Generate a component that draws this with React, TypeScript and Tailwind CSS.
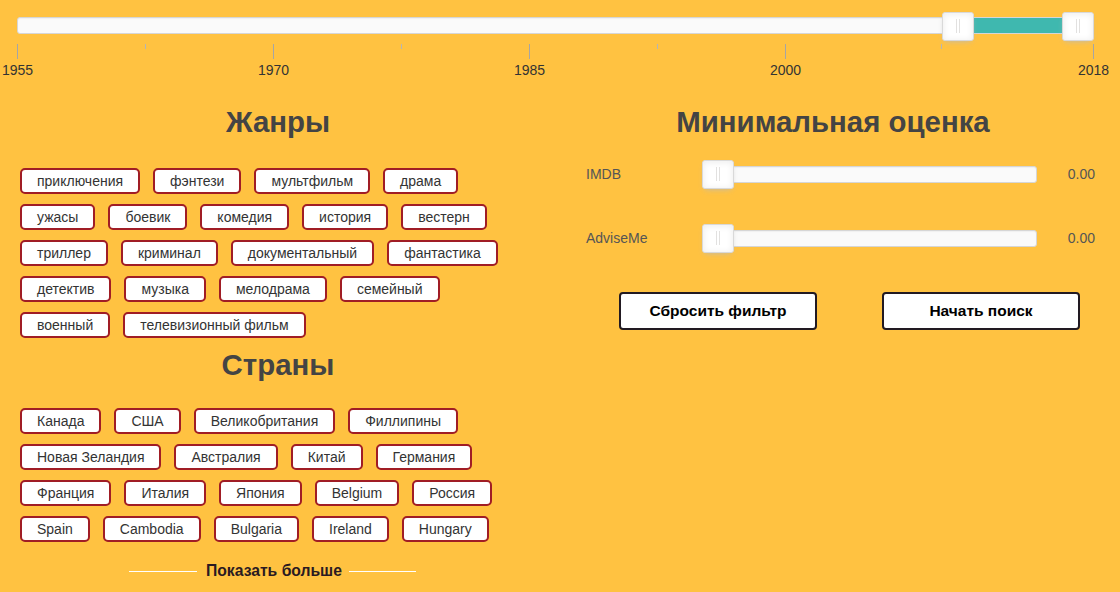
import React from "react";

const genres = [
  "приключения", "фэнтези", "мультфильм", "драма",
  "ужасы", "боевик", "комедия", "история", "вестерн",
  "триллер", "криминал", "документальный", "фантастика",
  "детектив", "музыка", "мелодрама", "семейный",
  "военный", "телевизионный фильм",
];

const countries = [
  "Канада", "США", "Великобритания", "Филлипины",
  "Новая Зеландия", "Австралия", "Китай", "Германия",
  "Франция", "Италия", "Япония", "Belgium", "Россия",
  "Spain", "Cambodia", "Bulgaria", "Ireland", "Hungary",
];

const majorPips = [
  { x: 0, label: "1955" },
  { x: 256, label: "1970" },
  { x: 512, label: "1985" },
  { x: 768, label: "2000" },
  { x: 1076, label: "2018" },
];
const minorPips = [128, 384, 640, 924];

function Handle({ className }: { className: string }) {
  return (
    <div
      className={
        "absolute h-[29px] w-[32px] rounded-[3px] border border-[#d9d9d9] bg-white shadow-[inset_0_0_1px_#fff,inset_0_1px_7px_#ebebeb,0_3px_6px_-3px_#bbb] " +
        className
      }
    >
      <div className="absolute left-[13px] top-[6px] h-[14px] w-px bg-[#e2e1e0]" />
      <div className="absolute left-[16px] top-[6px] h-[14px] w-px bg-[#e2e1e0]" />
    </div>
  );
}

function Chip({ label }: { label: string }) {
  return (
    <div className="flex h-[26px] items-center rounded-[5px] border-2 border-[#a01d25] bg-white px-[15px] text-[14px] leading-none text-[#333]">
      {label}
    </div>
  );
}

function ScoreRow({ label, className }: { label: string; className: string }) {
  return (
    <div className={"flex h-[30px] items-center " + className}>
      <div className="w-[116px] text-[14px] text-[#555]">{label}</div>
      <div className="relative h-[17px] w-[335px] rounded-[3px] border border-[#d6d6d6] bg-[#fafafa] shadow-[inset_0_1px_1px_#f0f0f0]">
        <Handle className="left-[-1px] top-[-7px]" />
      </div>
      <div className="w-[58px] text-right text-[14px] text-[#555]">0.00</div>
    </div>
  );
}

export default function App() {
  return (
    <div
      className="h-[592px] w-[1120px] overflow-hidden bg-[#ffc241]"
      style={{ fontFamily: '"Liberation Sans", Arial, sans-serif' }}
    >
      {/* Year range slider */}
      <div className="px-[17px] pt-[17px]">
        <div className="relative h-[17px] w-[1077px] rounded-[3px] border border-[#d6d6d6] bg-[#fafafa] shadow-[inset_0_1px_1px_#f0f0f0]">
          <div className="absolute left-[956px] top-0 h-full w-[89px] bg-[#3fb8af]" />
          <Handle className="left-[924px] top-[-6px]" />
          <Handle className="left-[1044px] top-[-6px]" />
        </div>
        <div className="relative h-[56px] w-[1077px]">
          {majorPips.map((p) => (
            <React.Fragment key={p.label}>
              <div
                className="absolute top-[10px] h-[15px] w-px bg-[#a5a5a5]"
                style={{ left: p.x }}
              />
              <div
                className="absolute top-[28px] -translate-x-1/2 text-[14px] leading-[16px] text-[#333]"
                style={{ left: p.x + 0.5 }}
              >
                {p.label}
              </div>
            </React.Fragment>
          ))}
          {minorPips.map((x) => (
            <div
              key={x}
              className="absolute top-[10px] h-[5px] w-px bg-[#b5b5b5]"
              style={{ left: x }}
            />
          ))}
        </div>
      </div>

      <div className="flex">
        {/* Left column */}
        <div className="w-[556px]">
          <h2 className="mt-[16px] text-center text-[29.4px] font-bold leading-[32px] text-[#444]">
            Жанры
          </h2>
          <div className="mt-[30px] flex w-[540px] flex-wrap gap-x-[13px] gap-y-[10px] pl-[20px]">
            {genres.map((g) => (
              <Chip key={g} label={g} />
            ))}
          </div>
          <h2 className="mt-[11px] text-center text-[29.4px] font-bold leading-[32px] text-[#444]">
            Страны
          </h2>
          <div className="mt-[27px] flex w-[540px] flex-wrap gap-x-[13px] gap-y-[10px] pl-[20px]">
            {countries.map((c) => (
              <Chip key={c} label={c} />
            ))}
          </div>
          <div className="ml-[129px] mt-[19px] flex h-[20px] items-center">
            <div className="h-px w-[68px] bg-white" />
            <span className="ml-[9px] mr-[7px] text-[15.7px] font-bold text-[#2a1a22]">Показать больше</span>
            <div className="h-px w-[67px] bg-white" />
          </div>
        </div>

        {/* Right column */}
        <div className="ml-[4px] w-[546px]">
          <h2 className="mt-[16px] text-center text-[29.4px] font-bold leading-[32px] text-[#444]">
            Минимальная оценка
          </h2>
          <div className="pl-[26px]">
            <ScoreRow label="IMDB" className="mt-[21px]" />
            <ScoreRow label="AdviseMe" className="mt-[34px]" />
          </div>
          <div className="ml-[59px] mt-[39px] flex gap-[65px]">
            <button className="h-[38px] w-[198px] rounded-[4px] border-2 border-[#221a22] bg-white text-[15.5px] font-bold text-black">
              Сбросить фильтр
            </button>
            <button className="h-[38px] w-[198px] rounded-[4px] border-2 border-[#221a22] bg-white text-[15.5px] font-bold text-black">
              Начать поиск
            </button>
          </div>
        </div>
      </div>
    </div>
  );
}
